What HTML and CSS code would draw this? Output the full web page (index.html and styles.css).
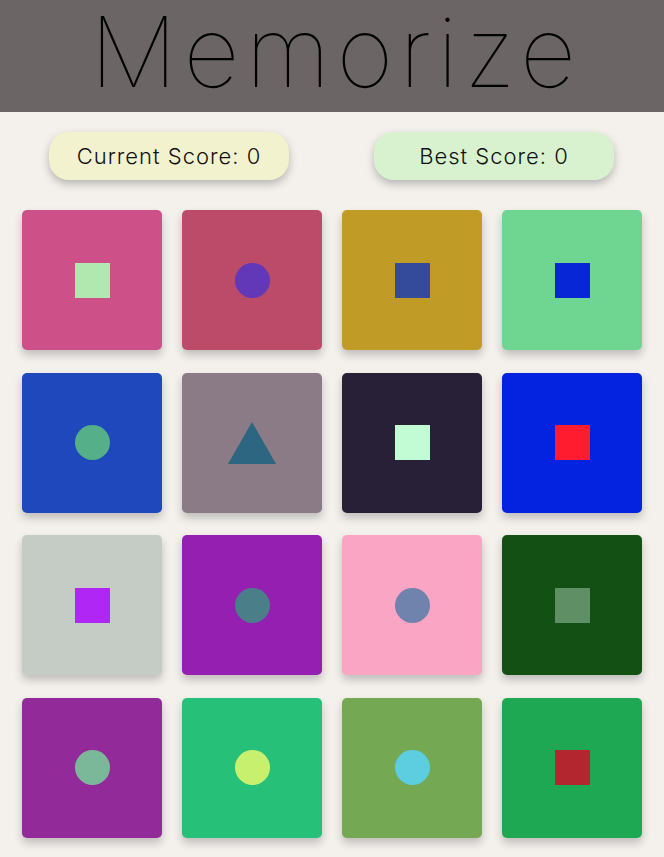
FILE: index.html
```html
<!DOCTYPE html>
<html>
<head>
<meta charset="utf-8">
<link rel="stylesheet" href="styles.css">
</head>
<body>
<header class="header"><h1 class="title">Memorize</h1></header>
<div class="scores">
  <div class="pill pill-current">Current Score: 0</div>
  <div class="pill pill-best">Best Score: 0</div>
</div>
<main class="grid">
  <div class="card" style="background:#cd5089"><span class="sq" style="background:#b0e8b0"></span></div>
  <div class="card" style="background:#bc4a69"><span class="dot" style="background:#6237b8"></span></div>
  <div class="card" style="background:#c09b26"><span class="sq" style="background:#344a9a"></span></div>
  <div class="card" style="background:#6fd692"><span class="sq" style="background:#0727d6"></span></div>

  <div class="card" style="background:#1e48bb"><span class="dot" style="background:#55b08a"></span></div>
  <div class="card" style="background:#8a7b86"><span class="tri" style="border-bottom-color:#2c6680"></span></div>
  <div class="card" style="background:#282036"><span class="sq" style="background:#c2fcd5"></span></div>
  <div class="card" style="background:#0323e0"><span class="sq" style="background:#ff1c2f"></span></div>

  <div class="card" style="background:#c5cbc5"><span class="sq" style="background:#b026f5"></span></div>
  <div class="card" style="background:#951fb0"><span class="dot" style="background:#4a7f8a"></span></div>
  <div class="card" style="background:#f9a5c3"><span class="dot" style="background:#7083ad"></span></div>
  <div class="card" style="background:#135013"><span class="sq" style="background:#5f8f64"></span></div>

  <div class="card" style="background:#922a9a"><span class="dot" style="background:#7bb89a"></span></div>
  <div class="card" style="background:#26c079"><span class="dot" style="background:#c7f06e"></span></div>
  <div class="card" style="background:#74a852"><span class="dot" style="background:#5dcde0"></span></div>
  <div class="card" style="background:#1ea854"><span class="sq" style="background:#b3252f"></span></div>
</main>
</body>
</html>
```
FILE: styles.css
```css
* { box-sizing: border-box; }
html, body { margin: 0; padding: 0; }
body {
  background: #f4f1ed;
  font-family: Inter, "Open Sans", sans-serif;
  width: 664px;
  height: 857px;
  overflow: hidden;
}
.header {
  background: #6b6565;
  height: 112px;
  display: flex;
  justify-content: center;
  align-items: center;
  padding-bottom: 9px;
  padding-left: 8px;
}
.title {
  margin: 0;
  font-weight: 100;
  font-size: 98px;
  line-height: 1;
  color: #000;
  letter-spacing: 6px;
}
.scores {
  display: flex;
  justify-content: space-between;
  padding: 20px 50px 0 49px;
}
.pill {
  width: 240px;
  height: 48px;
  border-radius: 20px;
  display: flex;
  align-items: center;
  justify-content: center;
  font-size: 22px;
  font-weight: 300;
  letter-spacing: 1px;
  color: #111;
  box-shadow: 0 4px 8px rgba(0,0,0,0.25);
}
.pill-current { background: #f3f2cf; }
.pill-best { background: #d8f2d0; }
.grid {
  display: grid;
  grid-template-columns: repeat(4, 140px);
  grid-auto-rows: 140px;
  column-gap: 20px;
  row-gap: 22.5px;
  padding: 30px 22px 0 22px;
}
.card {
  border-radius: 5px;
  display: flex;
  align-items: center;
  justify-content: center;
  box-shadow: 0 5px 9px rgba(0,0,0,0.22);
}
.sq { width: 35px; height: 35px; display: block; }
.dot { width: 35px; height: 35px; border-radius: 50%; display: block; }
.tri {
  width: 0; height: 0;
  border-left: 24px solid transparent;
  border-right: 24px solid transparent;
  border-bottom: 42px solid #2c6680;
  display: block;
}
```
